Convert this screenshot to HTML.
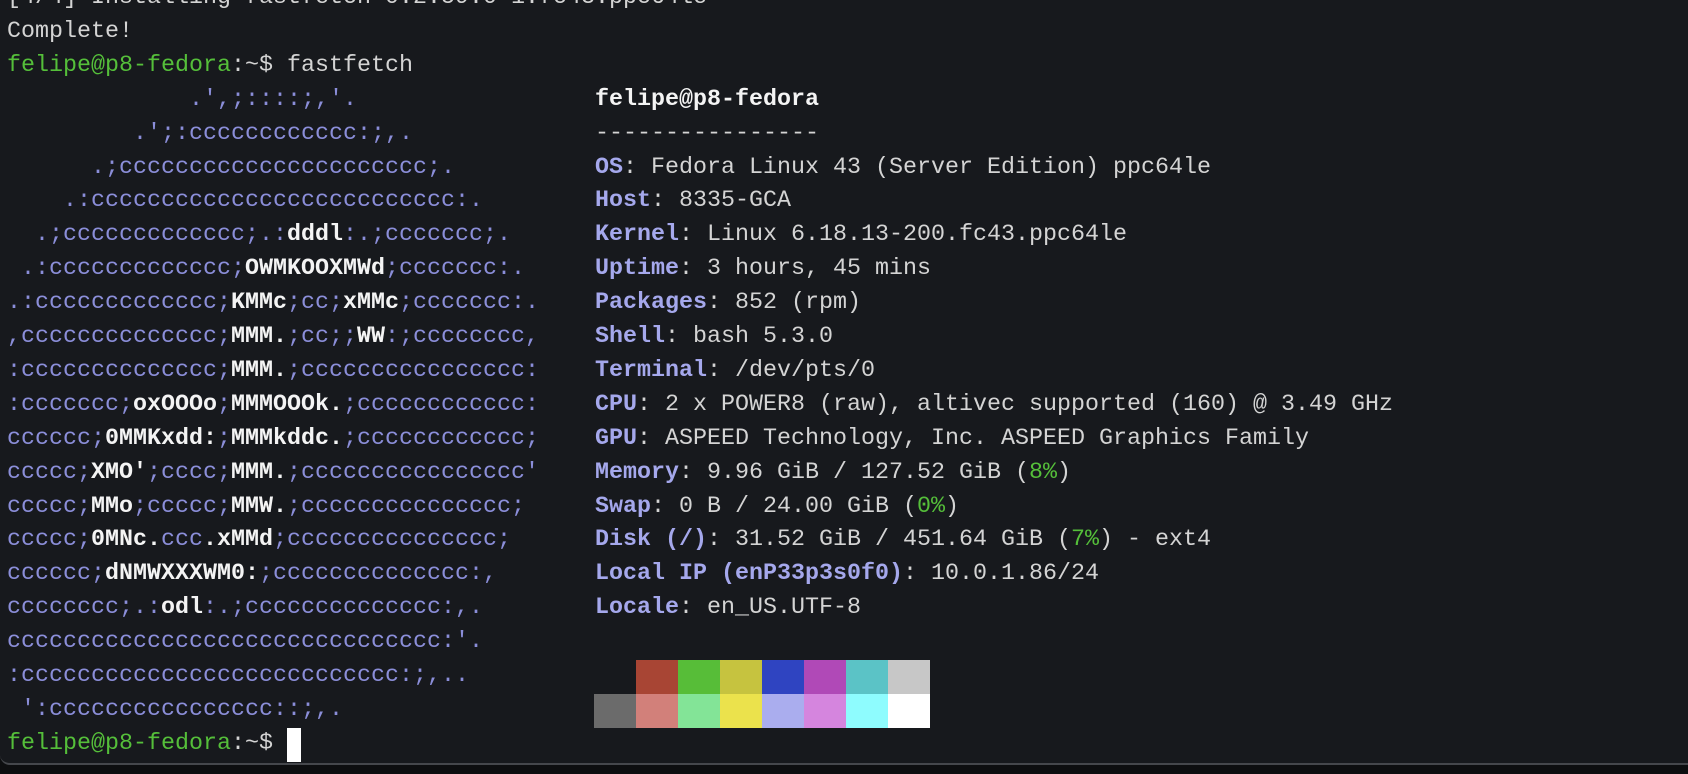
<!DOCTYPE html>
<html><head><meta charset="utf-8"><style>
html,body{margin:0;padding:0;}
body{width:1688px;height:774px;overflow:hidden;background:#0d0e10;position:relative;}
#term{position:absolute;left:0;top:0;width:1688px;height:763px;background:#17191d;border-bottom:2px solid #45474c;border-bottom-left-radius:10px;overflow:hidden;}
.l{position:absolute;left:7px;height:33.9px;line-height:33.9px;white-space:pre;font-family:"Liberation Mono",monospace;font-size:23.33px;color:#d4d4d4;}
.g{color:#55bf3a}.p{color:#8b8ed9}.w{color:#f4f4f4;font-weight:bold}.k{color:#a5a8ec;font-weight:bold}.t{color:#f4f4f4;font-weight:bold}
.sw{position:absolute;width:42px;height:34px;}
#cur{position:absolute;left:287px;top:728px;width:14px;height:34px;background:#fff;}
</style></head><body><div id="term">
<div class="l" style="top:-18px">[4/4] Installing fastfetch-0.2.59.0-1.fc43.ppc64le</div>
<div class="l" style="top:15.9px">Complete!</div>
<div class="l" style="top:49.8px"><span class="g">felipe@p8-fedora</span>:~$ fastfetch</div>
<div class="l p" style="top:83.7px">             .',;::::;,'.</div>
<div class="l p" style="top:117.6px">         .';:cccccccccccc:;,.</div>
<div class="l p" style="top:151.5px">      .;cccccccccccccccccccccc;.</div>
<div class="l p" style="top:185.4px">    .:cccccccccccccccccccccccccc:.</div>
<div class="l p" style="top:219.3px">  .;ccccccccccccc;.:<span class="w">dddl</span>:.;ccccccc;.</div>
<div class="l p" style="top:253.2px"> .:ccccccccccccc;<span class="w">OWMKOOXMWd</span>;ccccccc:.</div>
<div class="l p" style="top:287.1px">.:ccccccccccccc;<span class="w">KMMc</span>;cc;<span class="w">xMMc</span>;ccccccc:.</div>
<div class="l p" style="top:321px">,cccccccccccccc;<span class="w">MMM.</span>;cc;;<span class="w">WW</span>:;cccccccc,</div>
<div class="l p" style="top:354.9px">:cccccccccccccc;<span class="w">MMM.</span>;cccccccccccccccc:</div>
<div class="l p" style="top:388.8px">:ccccccc;<span class="w">oxOOOo</span>;<span class="w">MMMOOOk.</span>;cccccccccccc:</div>
<div class="l p" style="top:422.7px">cccccc;<span class="w">0MMKxdd:</span>;<span class="w">MMMkddc.</span>;cccccccccccc;</div>
<div class="l p" style="top:456.6px">ccccc;<span class="w">XMO'</span>;cccc;<span class="w">MMM.</span>;cccccccccccccccc'</div>
<div class="l p" style="top:490.5px">ccccc;<span class="w">MMo</span>;ccccc;<span class="w">MMW.</span>;ccccccccccccccc;</div>
<div class="l p" style="top:524.4px">ccccc;<span class="w">0MNc.</span>ccc<span class="w">.xMMd</span>;ccccccccccccccc;</div>
<div class="l p" style="top:558.3px">cccccc;<span class="w">dNMWXXXWM0:</span>;cccccccccccccc:,</div>
<div class="l p" style="top:592.2px">cccccccc;.:<span class="w">odl</span>:.;cccccccccccccc:,.</div>
<div class="l p" style="top:626.1px">ccccccccccccccccccccccccccccccc:'.</div>
<div class="l p" style="top:660px">:ccccccccccccccccccccccccccc:;,..</div>
<div class="l p" style="top:693.9px"> ':cccccccccccccccc::;,.</div>
<div class="l" style="top:727.8px"><span class="g">felipe@p8-fedora</span>:~$ </div>
<div id="cur"></div>

<div class="l" style="left:595px;top:83.7px"><span class="t">felipe@p8-fedora</span></div>
<div class="l" style="left:595px;top:117.6px">----------------</div>
<div class="l" style="left:595px;top:151.5px"><span class="k">OS</span>: Fedora Linux 43 (Server Edition) ppc64le</div>
<div class="l" style="left:595px;top:185.4px"><span class="k">Host</span>: 8335-GCA</div>
<div class="l" style="left:595px;top:219.3px"><span class="k">Kernel</span>: Linux 6.18.13-200.fc43.ppc64le</div>
<div class="l" style="left:595px;top:253.2px"><span class="k">Uptime</span>: 3 hours, 45 mins</div>
<div class="l" style="left:595px;top:287.1px"><span class="k">Packages</span>: 852 (rpm)</div>
<div class="l" style="left:595px;top:321px"><span class="k">Shell</span>: bash 5.3.0</div>
<div class="l" style="left:595px;top:354.9px"><span class="k">Terminal</span>: /dev/pts/0</div>
<div class="l" style="left:595px;top:388.8px"><span class="k">CPU</span>: 2 x POWER8 (raw), altivec supported (160) @ 3.49 GHz</div>
<div class="l" style="left:595px;top:422.7px"><span class="k">GPU</span>: ASPEED Technology, Inc. ASPEED Graphics Family</div>
<div class="l" style="left:595px;top:456.6px"><span class="k">Memory</span>: 9.96 GiB / 127.52 GiB (<span class="g">8%</span>)</div>
<div class="l" style="left:595px;top:490.5px"><span class="k">Swap</span>: 0 B / 24.00 GiB (<span class="g">0%</span>)</div>
<div class="l" style="left:595px;top:524.4px"><span class="k">Disk (/)</span>: 31.52 GiB / 451.64 GiB (<span class="g">7%</span>) - ext4</div>
<div class="l" style="left:595px;top:558.3px"><span class="k">Local IP (enP33p3s0f0)</span>: 10.0.1.86/24</div>
<div class="l" style="left:595px;top:592.2px"><span class="k">Locale</span>: en_US.UTF-8</div>

<div class="sw" style="left:636px;top:660px;background:#a84534"></div>
<div class="sw" style="left:678px;top:660px;background:#57bd38"></div>
<div class="sw" style="left:720px;top:660px;background:#c6c33f"></div>
<div class="sw" style="left:762px;top:660px;background:#2f44c1"></div>
<div class="sw" style="left:804px;top:660px;background:#b049b7"></div>
<div class="sw" style="left:846px;top:660px;background:#5bc3c6"></div>
<div class="sw" style="left:888px;top:660px;background:#c7c7c7"></div>
<div class="sw" style="left:594px;top:694px;background:#6b6b6b"></div>
<div class="sw" style="left:636px;top:694px;background:#d2807a"></div>
<div class="sw" style="left:678px;top:694px;background:#83e497"></div>
<div class="sw" style="left:720px;top:694px;background:#ebe24c"></div>
<div class="sw" style="left:762px;top:694px;background:#aaadee"></div>
<div class="sw" style="left:804px;top:694px;background:#d585de"></div>
<div class="sw" style="left:846px;top:694px;background:#8efcfe"></div>
<div class="sw" style="left:888px;top:694px;background:#ffffff"></div>
</div></body></html>
